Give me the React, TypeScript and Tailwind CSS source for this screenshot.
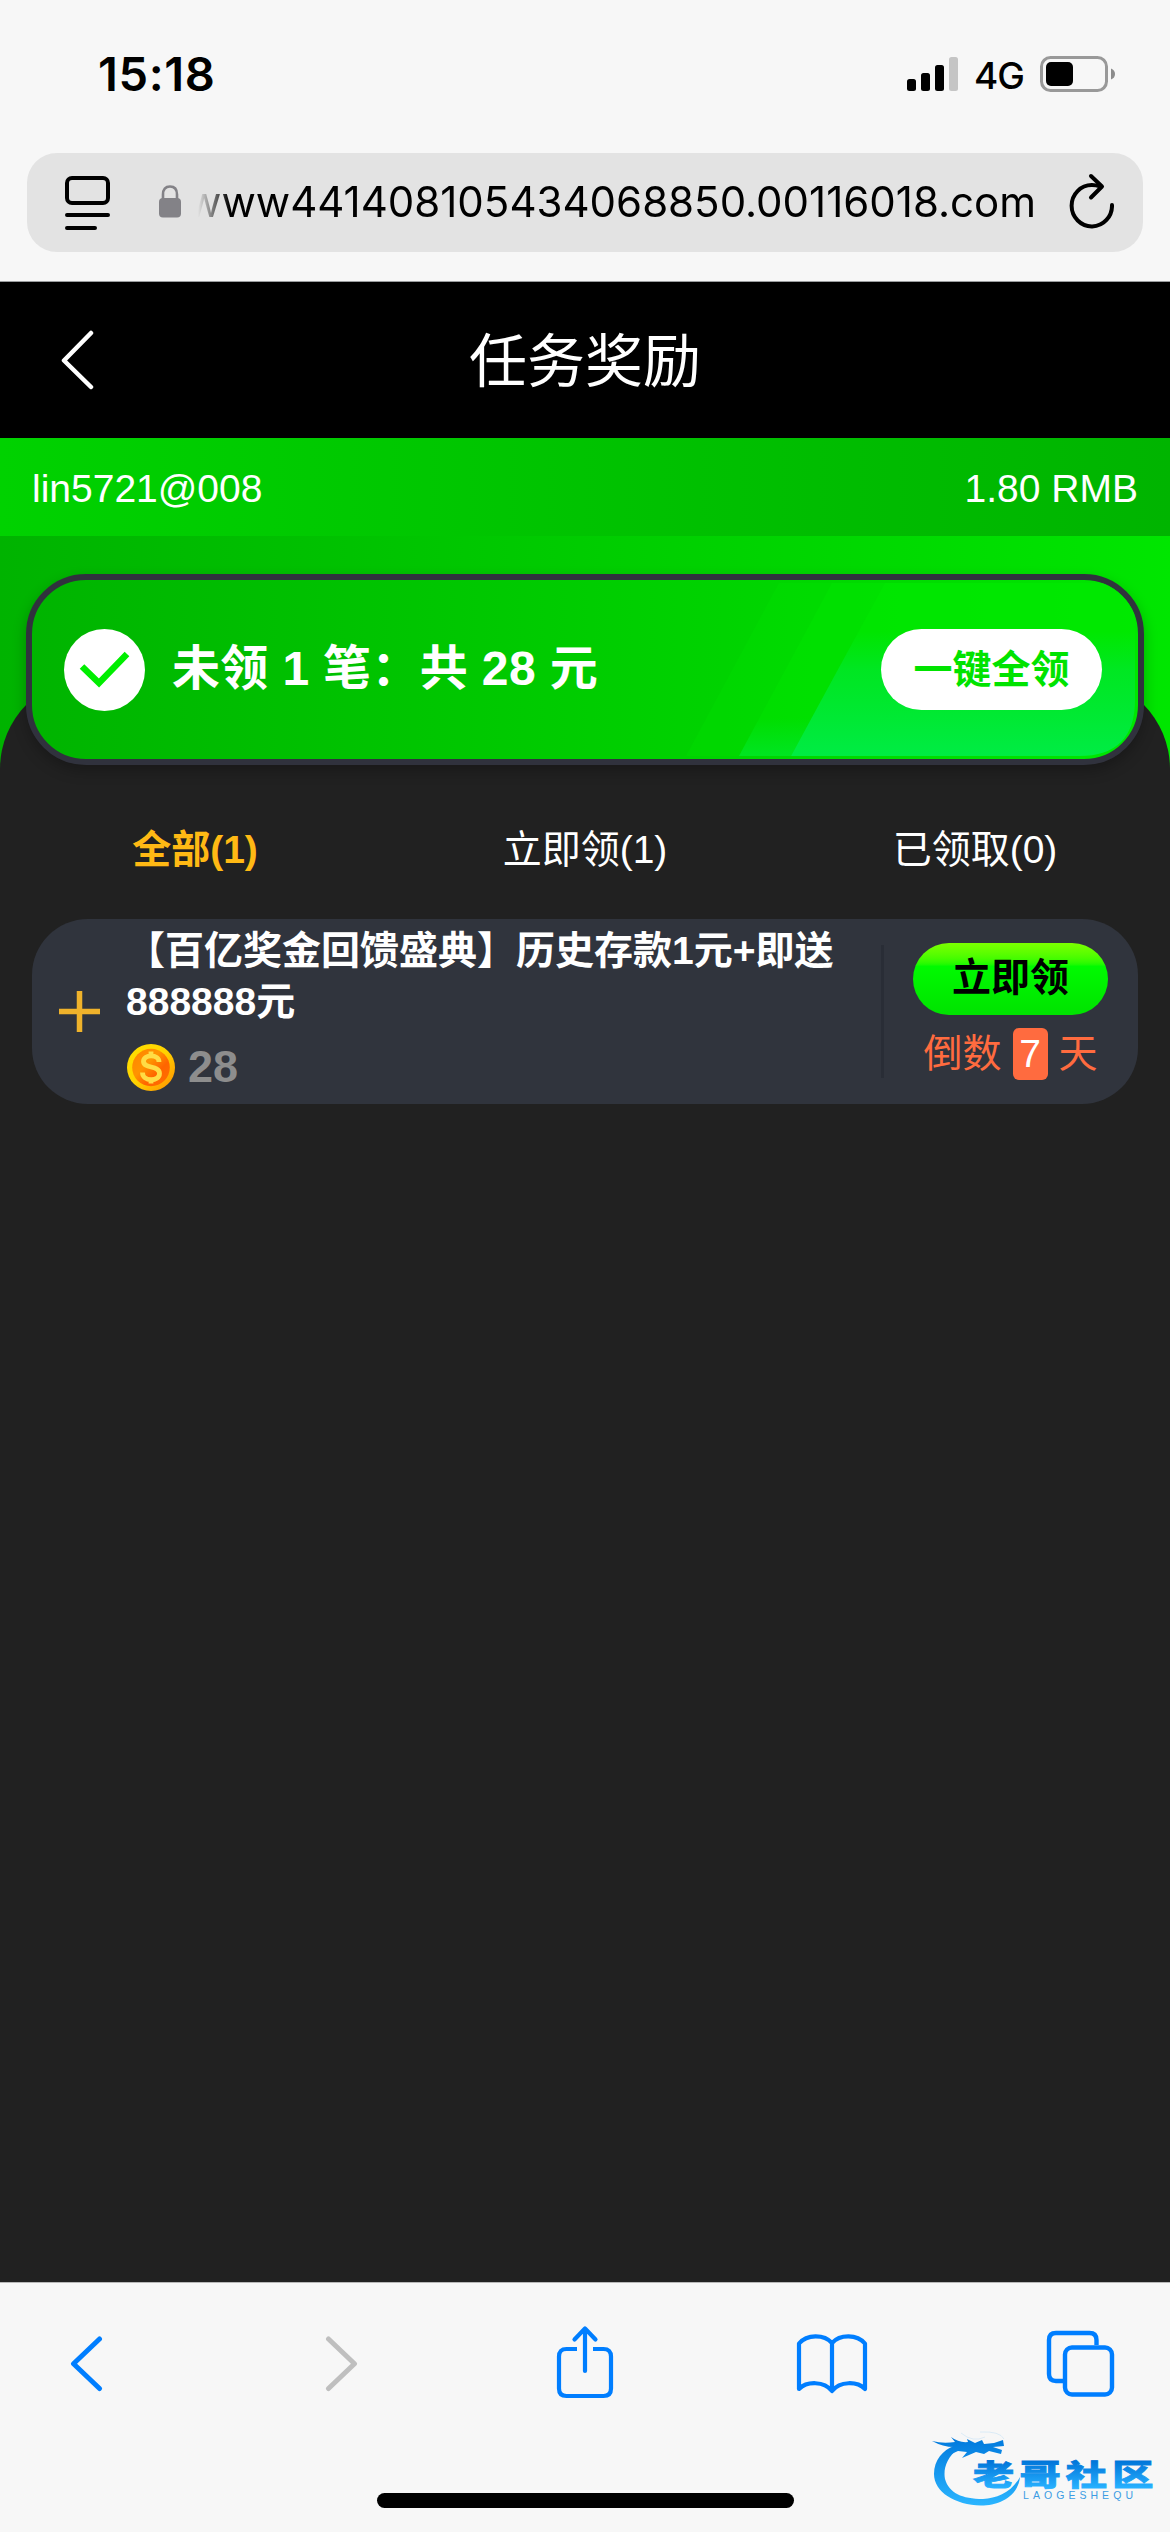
import React from "react";

function StatusBar() {
  return (
    <div className="flex h-[153px] items-start justify-between pl-[98px] pr-[54px] font-['Inter',sans-serif] text-black">
      <div className="mt-[46px] text-[47px] leading-[56px] font-semibold tracking-[0.6px]">15:18</div>
      <div className="mt-[56px] flex h-9 items-center">
        <svg width="51" height="34" viewBox="0 0 51 34" className="mb-px">
          <rect x="0" y="22" width="9" height="12" rx="2.5" />
          <rect x="14" y="16" width="9" height="18" rx="2.5" />
          <rect x="28" y="8" width="9" height="26" rx="2.5" />
          <rect x="42" y="0" width="9" height="34" rx="2.5" fill="#c5c5c5" />
        </svg>
        <div className="ml-4 w-[66px] pt-[3px] text-[37px] leading-9 font-medium tracking-[-1px]">4G</div>
        <svg width="76" height="36" viewBox="0 0 76 36">
          <rect x="1.5" y="1.5" width="65" height="33" rx="9" fill="none" stroke="#999" strokeWidth="3" />
          <rect x="6" y="6" width="27" height="24" rx="5" />
          <path d="M71 12.5q4 1.5 4 5.5t-4 5.5z" fill="#8c8c8c" />
        </svg>
      </div>
    </div>
  );
}

function AddressBar() {
  return (
    <div className="h-[128px] px-[27px]">
      <div className="flex h-[99px] w-[1116px] items-start rounded-[30px] bg-[#e3e3e3]">
        <svg width="46" height="56" viewBox="0 0 46 56" fill="none" stroke="#000" strokeWidth="4" strokeLinecap="round" className="mt-[22px] ml-[38px]">
          <rect x="2" y="3" width="41" height="25" rx="5" />
          <path d="M2 40h41M2 53h28" />
        </svg>
        <svg width="22" height="33" viewBox="0 0 22 33" className="mt-[32px] ml-[48px] shrink-0">
          <path d="M4 15V9.500Q4 1.500 11 1.500T18 9.500V15" fill="none" stroke="#838287" strokeWidth="2.600" />
          <rect x="0" y="13" width="22" height="19.500" rx="4" fill="#838287" />
        </svg>
        <div className="mt-[23px] ml-[17px] flex w-[838px] justify-end overflow-hidden [mask-image:linear-gradient(to_right,transparent,black_32px)]">
          <span className="font-['Inter',sans-serif] text-[42px] leading-[52px] whitespace-nowrap text-black">
            www441408105434068850.00116018.com
          </span>
        </div>
        <svg width="48" height="58" viewBox="0 0 48 58" fill="none" stroke="#000" strokeWidth="4" strokeLinecap="round" strokeLinejoin="round" className="mt-[19px] ml-[30px] shrink-0">
          <path d="M34 14.500Q30 13 26 13A20.200 20.700 0 1 0 46 33" />
          <path d="M25 4L36 14.500L25 25.500" />
        </svg>
      </div>
    </div>
  );
}

function TitleBar() {
  return (
    <div className="grid h-[157px] grid-cols-[170px_1fr_170px] items-center border-t border-[#9a9c9e] bg-black">
      <svg width="36" height="60" viewBox="0 0 36 60" fill="none" stroke="#fff" strokeWidth="4.500" strokeLinecap="round" strokeLinejoin="round" className="ml-[60px]">
        <path d="M31 3L4 30.500L31 57" />
      </svg>
      <h1 className="pt-[3px] text-center text-[58px] leading-[84px] text-white">任务奖励</h1>
    </div>
  );
}

function SummaryCard() {
  return (
    <div className="relative mx-[26px] -mt-[103px] h-[191px] shrink-0 overflow-hidden rounded-[60px] border-[6px] border-[#30323d] bg-linear-to-r from-[#00b400] to-[#00e600] shadow-[0_6px_14px_rgba(0,0,0,0.25)]">
      <svg width="1105" height="179" viewBox="0 0 1105 179" className="absolute inset-0">
        <defs>
          <linearGradient id="glow" x1="0" y1="0" x2="0" y2="1">
            <stop offset=".28" stopColor="#00e730" stopOpacity="0" />
            <stop offset=".5" stopColor="#00e734" stopOpacity=".65" />
            <stop offset="1" stopColor="#00ec48" stopOpacity=".95" />
          </linearGradient>
          <linearGradient id="low" x1="0" y1="0" x2="0" y2="1">
            <stop offset=".78" stopColor="#00e62a" stopOpacity="0" />
            <stop offset="1" stopColor="#00e62a" stopOpacity=".8" />
          </linearGradient>
        </defs>
        <path d="M747 3H1103V120Q1103 176 1047 176H654Z" fill="#00ec00" fillOpacity=".2" />
        <path d="M800 3H1103V120Q1103 176 1047 176H707Z" fill="#00ec00" fillOpacity=".3" />
        <path d="M853 3H1103V120Q1103 176 1047 176H759Z" fill="#00ea00" fillOpacity=".5" />
        <path d="M800 3H853L759 176H707Z" fill="url(#low)" />
        <path d="M853 3H1103V120Q1103 176 1047 176H759Z" fill="url(#glow)" />
      </svg>
      <div className="relative flex h-full items-center pr-[36px] pl-[32px]">
        <svg width="81" height="82" viewBox="0 0 81 82" className="shrink-0">
          <ellipse cx="40.500" cy="41" rx="40.500" ry="41" fill="#fff" />
          <path d="M18 37.500L35 54L63 25" fill="none" stroke="#00ee00" strokeWidth="6.500" />
        </svg>
        <div className="-mt-0.5 ml-[27px] flex-1 text-[48px] leading-[70px] font-bold tracking-[0.35px] whitespace-pre text-white">未领 1 笔：共 28 元</div>
        <button className="flex h-[81px] w-[221px] items-center justify-center rounded-full bg-white text-[39px] leading-[56px] font-bold text-[#00e300]">
          一键全领
        </button>
      </div>
    </div>
  );
}

function Tabs() {
  return (
    <div className="grid h-[154px] grid-cols-3 pt-[56px] text-center text-[39px] leading-[58px] text-white">
      <div className="font-bold text-[#ffb914]">全部(1)</div>
      <div>立即领(1)</div>
      <div>已领取(0)</div>
    </div>
  );
}

function Coin() {
  return (
    <svg width="48" height="47" viewBox="0 0 48 47">
      <defs>
        <linearGradient id="rim" x1="0" y1="0" x2="1" y2="1">
          <stop offset="0" stopColor="#ffe100" />
          <stop offset=".5" stopColor="#ffd200" />
          <stop offset="1" stopColor="#ff8c00" />
        </linearGradient>
        <linearGradient id="face" x1="0" y1="0" x2="1" y2="1">
          <stop offset="0" stopColor="#ff8400" />
          <stop offset=".4" stopColor="#ff9300" />
          <stop offset=".65" stopColor="#ff6500" />
          <stop offset="1" stopColor="#ff7100" />
        </linearGradient>
      </defs>
      <ellipse cx="24" cy="23.500" rx="24" ry="23.500" fill="url(#rim)" />
      <circle cx="24" cy="23.500" r="18.800" fill="url(#face)" />
      <path d="M32 18C32 10 16.500 10 16.500 17.500C16.500 25 32.500 21 32.500 29.500C32.500 38 15.500 38 15.500 28.500M24 7.500V12M24 35V39.500" fill="none" stroke="#ffdc45" strokeWidth="4.800" />
    </svg>
  );
}

function RewardItem() {
  return (
    <div className="mx-[32px] flex h-[185px] rounded-[56px] bg-[#30343d]">
      <svg width="41" height="41" viewBox="0 0 41 41" stroke="#efb22b" strokeWidth="5.500" className="mt-[72px] ml-[27px] shrink-0">
        <path d="M0 20.500H41M20.500 0V41" />
      </svg>
      <div className="ml-[26px] w-[723px] shrink-0 pt-[6px]">
        <div className="text-[39px] leading-[51px] font-bold text-white">
          【百亿奖金回馈盛典】历史存款1元+即送
          <br />
          888888元
        </div>
        <div className="mt-[17px] flex h-[47px] items-center pl-px">
          <Coin />
          <span className="-mt-0.5 ml-[13px] text-[45px] leading-[47px] font-bold text-[#8d8d8d]">28</span>
        </div>
      </div>
      <div className="mt-[26px] ml-[32px] h-[133px] w-[3px] bg-[#292d36]" />
      <div className="ml-[29px] w-[195px] pt-[24px]">
        <button className="flex h-[72px] w-[195px] items-center justify-center rounded-full bg-linear-to-b from-[#7aff00] via-[#00fb00] via-32% to-[#00e200] pb-[2px] text-[39px] leading-[56px] font-bold text-black">
          立即领
        </button>
        <div className="mt-[13px] flex h-[52px] items-center justify-center text-[39px] leading-[52px] text-[#ff6b3f]">
          <span>倒数</span>
          <span className="mx-[11px] h-[52px] w-[35px] rounded-[6px] bg-[#ff6b3f] text-center text-white">7</span>
          <span>天</span>
        </div>
      </div>
    </div>
  );
}

function SiteLogo() {
  return (
    <svg width="240" height="102" viewBox="930 2430 240 102" className="absolute top-[147px] left-[930px]">
      <defs>
        <linearGradient id="ring" gradientUnits="userSpaceOnUse" x1="0" y1="2437" x2="0" y2="2505">
          <stop offset="0" stopColor="#0078dc" />
          <stop offset="1" stopColor="#2bb5ff" />
        </linearGradient>
        <linearGradient id="word" gradientUnits="userSpaceOnUse" x1="0" y1="-25" x2="0" y2="2">
          <stop offset="0" stopColor="#0074d8" />
          <stop offset="1" stopColor="#27b0ff" />
        </linearGradient>
      </defs>
      <g fill="url(#ring)">
        <path d="M958 2449C947 2457 943 2469 945 2479C949 2493 962 2499 983 2499C997 2498 1011 2493 1020 2477C1018 2497 998 2505.500 981 2505.500C955 2505 934 2492 934 2474C934 2460 943 2450 954 2446Z" />
        <path d="M932 2441Q943 2444 955 2442L951 2437Q959 2443 968 2442L967 2439L975 2443L982 2440L984 2444L994 2443L1003 2440L1004 2446L993 2447L1002 2450L1001 2454L989 2451L984 2454L976 2452L962 2458L967 2452L958 2451L947 2456L954 2447Q943 2447 932 2441Z" />
      </g>
      <path d="M961 2433Q973 2443 985 2437M980 2432Q1000 2431 1004 2439" fill="none" stroke="#b9dcf3" opacity=".45" />
      <text transform="translate(973 2485.500) scale(1.42 1)" fontSize="29" fontWeight="900" letterSpacing="3.700" fill="url(#word)" stroke="url(#word)" strokeWidth=".8" fontFamily="Noto Sans CJK SC, sans-serif">老哥社区</text>
      <text x="1023" y="2498.500" fontSize="10.500" letterSpacing="4.050" fill="#3b9ce4" fontFamily="Liberation Sans, sans-serif">LAOGESHEQU</text>
    </svg>
  );
}

function BrowserToolbar() {
  return (
    <div className="relative h-[250px] border-t border-[#b8b8b8] bg-[#f7f7f7]">
      <div className="flex items-start pt-[41px]">
        <svg width="34" height="76" viewBox="0 0 34 76" fill="none" stroke="#007eff" strokeWidth="5" strokeLinecap="round" strokeLinejoin="round" className="ml-[70px]">
          <path d="M29.500 15L3.500 39.700L29.500 64.500" />
        </svg>
        <svg width="34" height="76" viewBox="0 0 34 76" fill="none" stroke="#bfbfbf" strokeWidth="5" strokeLinecap="round" strokeLinejoin="round" className="ml-[221px]">
          <path d="M3.500 15L29.500 39.700L3.500 64.500" />
        </svg>
        <svg width="58" height="76" viewBox="0 0 58 76" fill="none" stroke="#007eff" strokeWidth="4.200" strokeLinejoin="round" className="ml-[197px]">
          <path d="M21 25H10.500Q3 25 3 32.500V64.500Q3 72 10.500 72H47.500Q55 72 55 64.500V32.500Q55 25 47.500 25H37" />
          <path d="M29 47V4.500M18.500 15.500L29 4.500L39.500 15.500" strokeLinecap="round" />
        </svg>
        <svg width="72" height="76" viewBox="0 0 72 76" fill="none" stroke="#007eff" strokeWidth="4.200" strokeLinecap="round" strokeLinejoin="round" className="ml-[182px]">
          <path d="M36 19C28 10 11 10 3 19.500V65C11 57 28 57 36 67C44 57 61 57 69 65V19.500C61 10 44 10 36 19ZM36 19V67" />
        </svg>
        <svg width="70" height="76" viewBox="0 0 70 76" fill="none" stroke="#007eff" strokeWidth="4.400" className="ml-[178px]">
          <path d="M50.500 21V16Q50.500 9 43.500 9H10Q3 9 3 16V50Q3 57 10 57H18" />
          <rect x="19" y="23.500" width="47" height="47" rx="7" />
        </svg>
      </div>
      <div className="absolute top-[210px] left-[377px] h-[15px] w-[417px] rounded-full bg-black" />
      <SiteLogo />
    </div>
  );
}

export default function App() {
  return (
    <div className="flex h-[2532px] w-[1170px] flex-col overflow-hidden bg-[#f7f7f7] font-['Liberation_Sans','Noto_Sans_CJK_SC',sans-serif]">
      <StatusBar />
      <AddressBar />
      <TitleBar />
      <div className="flex h-[98px] items-center justify-between bg-linear-to-r from-[#00d200] to-[#00b400] px-[32px] pt-[4px] text-[39px] text-white">
        <span>lin5721@008</span>
        <span>1.80 RMB</span>
      </div>
      <main className="flex flex-1 flex-col bg-linear-to-r from-[#00b300] to-[#00e600] pt-[141px]">
        <div className="flex flex-1 flex-col rounded-t-[92px] bg-[#212121]">
          <SummaryCard />
          <Tabs />
          <RewardItem />
        </div>
      </main>
      <BrowserToolbar />
    </div>
  );
}
